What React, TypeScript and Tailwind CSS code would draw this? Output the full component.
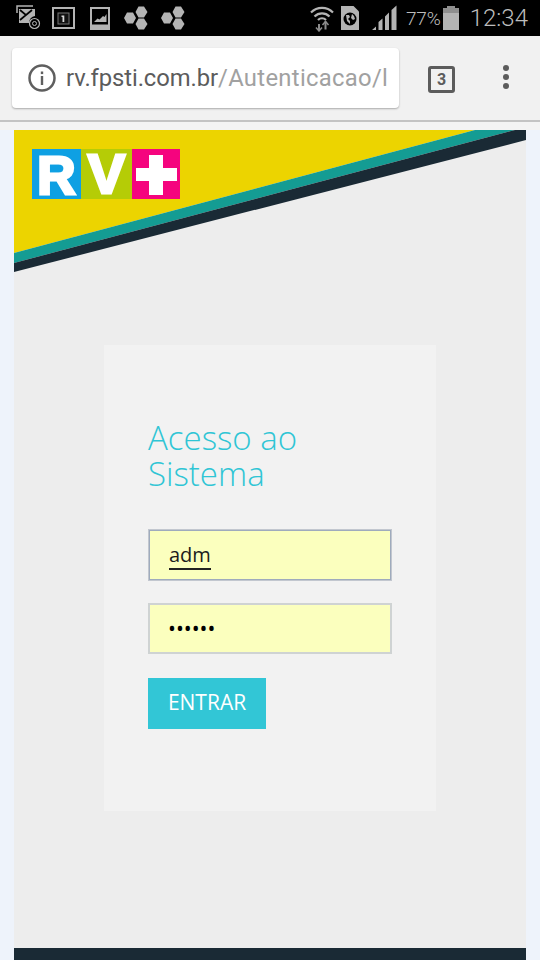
import React from "react";

function Hexes({ className }: { className: string }) {
  return (
    <svg width="24" height="24" viewBox="0 0 24 24" className={className} fill="#b4b4b4">
      <path d="M14.500 0.500h5.500l3.500 5.500-3.500 5.500h-5.500l-3-5.500zM3 6.500h6l3 5.500-3 5.500H3L0 12zM14.500 12.500h5.500l3.500 5.500-3.500 5.500h-5.500l-3-5.500z" />
    </svg>
  );
}

function StatusLeft() {
  return (
    <div className="flex items-center">
      <svg width="28" height="26" viewBox="0 0 28 26" className="ml-[16px]" fill="none">
        <path d="M1 8V1h16" stroke="#b4b4b4" strokeWidth="1.500" />
        <path d="M3 4h16v7a7 7 0 0 0-6 7H3z" fill="#b4b4b4" />
        <path d="M4 5l6 5-6 5M16 5l-6 5" stroke="#000" strokeWidth="1.700" />
        <circle cx="18.500" cy="18.500" r="5" stroke="#b4b4b4" strokeWidth="1.200" />
        <circle cx="18.500" cy="18.500" r="2" stroke="#b4b4b4" strokeWidth="1" />
      </svg>
      <svg width="23" height="22" viewBox="0 0 23 22" className="ml-[8px]" fill="none">
        <rect x="0" y="0" width="23" height="22" fill="#b4b4b4" />
        <rect x="2" y="2" width="19" height="18" fill="#000" />
        <rect x="6" y="6" width="11" height="11" fill="#111" stroke="#777" strokeWidth="1" />
        <path d="M9.500 8.500h2.800v6.500h-1.800v-5h-1z" fill="#d8d8d8" />
      </svg>
      <svg width="20" height="23" viewBox="0 0 20 23" className="ml-[15px]" fill="none">
        <rect x="0" y="0" width="20" height="23" fill="#b4b4b4" />
        <rect x="2" y="2" width="16" height="15.500" fill="#000" />
        <path d="M4 15l3.500-3.500 2 1 3.500-3.500 1.500 1 2-3v8z" fill="#b4b4b4" />
      </svg>
      <Hexes className="ml-[14px]" />
      <Hexes className="ml-[13px]" />
    </div>
  );
}

function StatusRight() {
  return (
    <div className="flex items-center">
      <svg width="24" height="27" viewBox="0 0 24 27" fill="none" stroke="#b4b4b4" strokeWidth="2.200">
        <path d="M1 7.500a15.500 15.500 0 0 1 22 0M4.500 11.500a10.500 10.500 0 0 1 15 0M8 15a5.500 5.500 0 0 1 8 0" />
        <path d="M9 19v7M15.500 16.500v8" stroke="#8c8c8c" strokeWidth="2" />
        <path d="M6 22.500l3 3.500 3-3.500M12.500 20l3-3.500 3 3.500" stroke="#8c8c8c" strokeWidth="1.500" />
      </svg>
      <svg width="18" height="24" viewBox="0 0 18 24" className="ml-[7px]">
        <path d="M0 0h12.500l5.500 5.500V24H0z" fill="#b4b4b4" />
        <circle cx="9" cy="13" r="6.500" fill="#000" />
        <path d="M5 9l3 0 1 2-2 2 2 2v3l-3-3zM11 8l2 2 1 3-2 1-2-2z" fill="#b4b4b4" />
      </svg>
      <svg width="25" height="26" viewBox="0 0 25 26" className="ml-[13px]">
        <path d="M0 25l4-3.500V25zM6.500 25v-8l4-3.500V25zM13 25V11.500l4-4V25z" fill="#b4b4b4" />
        <path d="M19.500 25V5l5-4.500V25z" fill="#b4b4b4" />
      </svg>
      <span className="ml-[9px] font-['Roboto',sans-serif] text-[19px] font-light leading-none tracking-[-0.1px] text-[#bdbdbd]">77%</span>
      <svg width="16" height="24" viewBox="0 0 16 24" className="ml-[2px]">
        <rect x="4" y="0" width="8" height="3" fill="#8f8f8f" />
        <rect x="0" y="2" width="16" height="6" fill="#8f8f8f" />
        <rect x="0" y="7" width="16" height="17" fill="#b4b4b4" />
      </svg>
      <span className="ml-[11px] mr-[12px] font-['Roboto',sans-serif] text-[24px] font-light leading-none text-[#bdbdbd]">12:34</span>
    </div>
  );
}

function Logo() {
  return (
    <div className="flex h-[50px] w-[148px] font-['Liberation_Sans',sans-serif] font-bold leading-none text-white blur-[0.4px]">
      <div className="flex w-[49px] items-center justify-center bg-[#0ea0e3] pt-[3px] text-[53px] [-webkit-text-stroke:3px_white]">R</div>
      <div className="flex w-[51px] items-center justify-center bg-[#b5cc06] text-[56px] [-webkit-text-stroke:3px_white]">V</div>
      <div className="flex flex-1 items-center justify-center bg-[#f5047e] pl-[1px] pt-[1px]">
        <svg width="41" height="40" viewBox="0 0 41 40">
          <path d="M13 0h14v13h14v13H27v14H13V26H0V13h13z" fill="#fff" />
        </svg>
      </div>
    </div>
  );
}

export default function App() {
  return (
    <div className="flex h-[960px] w-[540px] flex-col overflow-hidden bg-[#eef3fb] font-['Open_Sans',sans-serif]">
      <div className="flex h-[36px] shrink-0 items-center justify-between bg-black">
        <StatusLeft />
        <StatusRight />
      </div>

      <div className="flex h-[86px] shrink-0 items-start border-b-2 border-[#c4c4c4] bg-[#f1f1f1] pt-[12px]">
        <div className="ml-[12px] flex h-[60px] w-[387px] items-center rounded-[4px] bg-white shadow-[0_1px_2px_rgba(0,0,0,0.3)]">
          <svg width="28" height="28" viewBox="0 0 28 28" className="ml-[16px] shrink-0" fill="none">
            <circle cx="14" cy="14" r="12.500" stroke="#5f5f5f" strokeWidth="2.500" />
            <rect x="12.800" y="12" width="2.400" height="9" fill="#5f5f5f" />
            <rect x="12.800" y="7.500" width="2.400" height="2.600" fill="#5f5f5f" />
          </svg>
          <div className="ml-[10px] whitespace-nowrap pt-[1px] font-['Roboto',sans-serif] text-[23.8px] tracking-[-0.08px] text-[#5c5c5c]">
            rv.fpsti.com.br<span className="tracking-[0.32px] text-[#a1a1a1]">/Autenticacao/l</span>
          </div>
        </div>
        <div className="ml-[29px] mt-[18px] flex h-[27px] w-[27px] items-center justify-center rounded-[3px] border-[3px] border-[#5c5c5c] font-['Roboto',sans-serif] text-[16px] font-bold leading-none text-[#5c5c5c]">3</div>
        <div className="ml-[48px] mt-[17px] flex flex-col gap-[3px]">
          <span className="h-[6px] w-[6px] rounded-full bg-[#5c5c5c]" />
          <span className="h-[6px] w-[6px] rounded-full bg-[#5c5c5c]" />
          <span className="h-[6px] w-[6px] rounded-full bg-[#5c5c5c]" />
        </div>
      </div>

      <div className="h-[8px] shrink-0 bg-[#f4f4f4]" />

      <div className="relative mx-[14px] flex w-[512px] flex-1 flex-col items-center bg-[#ededed]">
        <svg width="512" height="142" viewBox="0 0 512 142" className="block shrink-0">
          <polygon points="0,123 461,0 0,0" fill="#ecd400" />
          <polygon points="0,123 461,0 501,0 0,133" fill="#149c93" />
          <polygon points="0,133 501,0 512,0 512,10 0,142" fill="#1a2a35" />
        </svg>
        <div className="absolute left-[18px] top-[19px]">
          <Logo />
        </div>

        <div className="mt-[73px] flex h-[466px] w-[332px] flex-col bg-[#f2f2f2] pl-[44px] pt-[75px]">
          <h1 className="w-[200px] text-[33px] font-light leading-[36px] text-[#2fc5d5]">Acesso ao Sistema</h1>
          <div className="mt-[37px] flex h-[52px] w-[244px] items-center border border-[#c2c7cf] bg-[#fbffbe] pl-[20px] pt-[2px] shadow-[inset_0_0_0_1px_#9fabbd]">
            <span className="border-b-2 border-[#222] text-[20px] leading-[26px] text-[#1c1c1c]">adm</span>
          </div>
          <div className="mt-[22px] flex h-[51px] w-[244px] items-center border-2 border-[#cfd3d3] bg-[#fbffbe] pl-[18px] text-[21px] leading-none text-black">
            ••••••
          </div>
          <button className="mt-[24px] h-[51px] w-[118px] bg-[#32c6d6] pb-[2px] text-[21px] text-white">ENTRAR</button>
        </div>
      </div>

      <div className="mx-[14px] h-[12px] w-[512px] shrink-0 bg-[#1a2a35]" />
    </div>
  );
}
